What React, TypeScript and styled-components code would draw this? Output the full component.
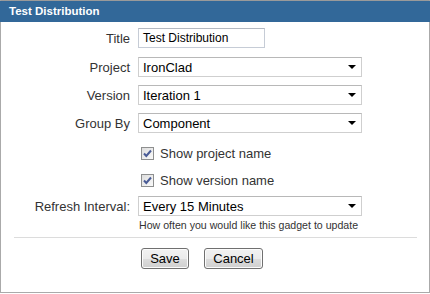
import React from "react";
import styled, { createGlobalStyle } from "styled-components";

const Global = createGlobalStyle`
  html, body { margin: 0; padding: 0; background: #fff; }
  body { font-family: "Liberation Sans", Arial, sans-serif; }
`;

const Frame = styled.div`
  width: 430px;
  height: 293px;
  box-sizing: border-box;
  border: 1px solid #aaaaaa;
  border-top-color: #9a9a9a;
  display: flex;
  flex-direction: column;
  background: #fff;
`;

const Header = styled.div`
  height: 21px;
  margin: 0 -1px;
  background: #326899;
  color: #fff;
  font-weight: bold;
  font-size: 11.5px;
  line-height: 21px;
  padding-left: 9px;
`;

const Body = styled.div`
  display: flex;
  flex-direction: column;
  padding: 6px 0 0 0;
`;

const Row = styled.div<{ $h: number; $mb: number }>`
  display: grid;
  grid-template-columns: 129px 1fr;
  column-gap: 8px;
  align-items: center;
  height: ${(p) => p.$h}px;
  margin-bottom: ${(p) => p.$mb}px;
`;

const Label = styled.label`
  text-align: right;
  font-size: 13px;
  color: #333;
`;

const TextInput = styled.div`
  width: 127px;
  height: 20px;
  box-sizing: border-box;
  border: 1px solid #c6ccd6;
  border-top-color: #b4b9c2;
  font-size: 12px;
  line-height: 18px;
  padding-left: 4px;
  color: #000;
`;

const Select = styled.div`
  width: 224px;
  height: 20px;
  box-sizing: border-box;
  border: 1px solid #cfcfcf;
  border-top-color: #b8b8b8;
  display: flex;
  align-items: center;
  justify-content: space-between;
  padding: 0 5px 0 4px;
  font-size: 13px;
  color: #000;
`;

const Arrow = styled.span`
  width: 0;
  height: 0;
  border-left: 4px solid transparent;
  border-right: 4px solid transparent;
  border-top: 4px solid #000;
`;

const CheckRow = styled.div`
  display: flex;
  align-items: center;
  gap: 6px;
  padding-left: 3px;
  font-size: 13px;
  color: #333;
`;

const Help = styled.div`
  font-size: 10.6px;
  color: #333;
  margin-top: 3px;
  padding-left: 1px;
`;

const Rule = styled.hr`
  border: 0;
  border-top: 1px solid #dcdcdc;
  margin: 0 12px 10px 13px;
`;

const Buttons = styled.div`
  display: flex;
  gap: 15px;
  padding-left: 140px;
`;

const Button = styled.button<{ $w: number }>`
  width: ${(p) => p.$w}px;
  height: 21px;
  border: 1px solid #707070;
  border-radius: 3px;
  background: linear-gradient(#f2f2f2 0%, #ebebeb 50%, #dddddd 51%, #cfcfcf 100%);
  font-family: "Liberation Sans", Arial, sans-serif;
  font-size: 13px;
  color: #000;
  padding: 0;
  box-shadow: inset 0 0 0 1px #fcfcfc;
`;

const Check = () => (
  <svg width="13" height="13" viewBox="0 0 13 13">
    <defs>
      <linearGradient id="cbg" x1="0" y1="0" x2="1" y2="1">
        <stop offset="0" stopColor="#dcdcdc" />
        <stop offset="1" stopColor="#fbfbfb" />
      </linearGradient>
    </defs>
    <rect x="0.5" y="0.5" width="12" height="12" fill="url(#cbg)" stroke="#8e8f8f" />
    <path d="M3 6.5 L5.3 9 L10 3.5" fill="none" stroke="#4a5c96" strokeWidth="2" />
  </svg>
);

export default function App() {
  return (
    <>
      <Global />
      <Frame>
        <Header>Test Distribution</Header>
        <Body>
          <Row $h={20} $mb={9}>
            <Label>Title</Label>
            <TextInput>Test Distribution</TextInput>
          </Row>
          <Row $h={20} $mb={8}>
            <Label>Project</Label>
            <Select>IronClad<Arrow /></Select>
          </Row>
          <Row $h={20} $mb={8}>
            <Label>Version</Label>
            <Select>Iteration 1<Arrow /></Select>
          </Row>
          <Row $h={20} $mb={10}>
            <Label>Group By</Label>
            <Select>Component<Arrow /></Select>
          </Row>
          <Row $h={20} $mb={7}>
            <span />
            <CheckRow><Check />Show project name</CheckRow>
          </Row>
          <Row $h={20} $mb={6}>
            <span />
            <CheckRow><Check />Show version name</CheckRow>
          </Row>
          <Row $h={20} $mb={0}>
            <Label>Refresh Interval:</Label>
            <Select>Every 15 Minutes<Arrow /></Select>
          </Row>
          <Row $h={14} $mb={7}>
            <span />
            <Help>How often you would like this gadget to update</Help>
          </Row>
          <Rule />
          <Buttons>
            <Button $w={48}>Save</Button>
            <Button $w={59}>Cancel</Button>
          </Buttons>
        </Body>
      </Frame>
    </>
  );
}
